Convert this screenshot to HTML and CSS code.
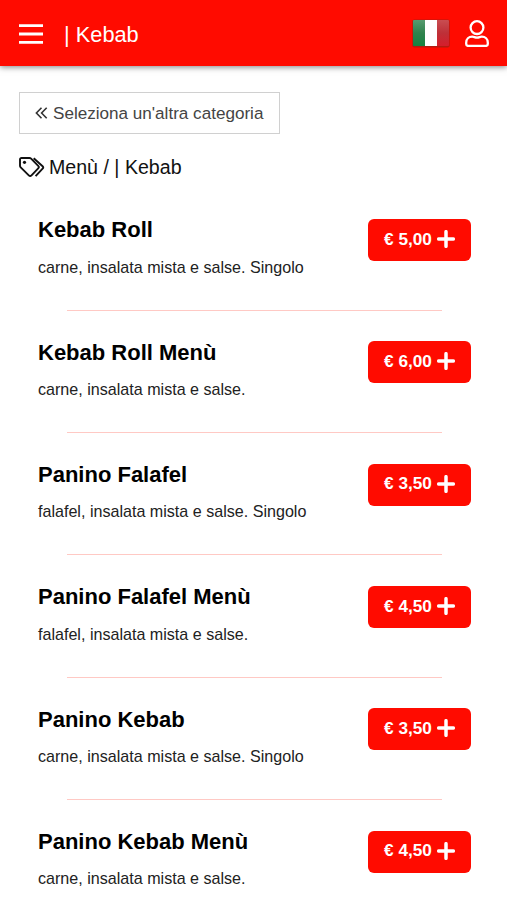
FILE: index.html
```html
<!DOCTYPE html>
<html lang="it">
<head>
<meta charset="utf-8">
<meta name="viewport" content="width=device-width, initial-scale=1">
<title>Menù | Kebab</title>
<link rel="stylesheet" href="styles.css">
</head>
<body>
<header class="topbar">
  <svg class="menu-icon" viewBox="0 0 24 20" aria-hidden="true"><path d="M0 1.7h24M0 10h24M0 18.3h24"/></svg>
  <h1 class="title">| Kebab</h1>
  <svg class="flag" viewBox="0 0 38 29" aria-hidden="true">
    <defs>
      <linearGradient id="green" x2="0" y2="1"><stop stop-color="#579b70"/><stop offset=".5" stop-color="#30834d"/><stop offset="1" stop-color="#168341"/></linearGradient>
      <linearGradient id="red" x2="0" y2="1"><stop stop-color="#c94d51"/><stop offset=".5" stop-color="#be3038"/><stop offset="1" stop-color="#d51e2b"/></linearGradient>
    </defs>
    <rect x=".3" y=".6" width="37.4" height="28" rx="2" fill="#b51b10"/>
    <path fill="url(#green)" d="M2 1h11v26H2a1 1 0 0 1-1-1V2a1 1 0 0 1 1-1z"/>
    <path fill="#fff" d="M13 1h12v26H13z"/>
    <path fill="url(#red)" d="M25 1h11a1 1 0 0 1 1 1v24a1 1 0 0 1-1 1H25z"/>
  </svg>
  <svg class="user-icon" viewBox="0 0 24 27" aria-hidden="true"><circle cx="12" cy="7.600" r="6.400"/><path d="M7.200 16.700c1.800 0 2.600.9 4.800.9s3-.9 4.800-.9c3.400 0 6 2.600 6 6v1.300c0 1.100-.8 1.900-1.900 1.900H3.100c-1.100 0-1.900-.8-1.900-1.900v-1.300c0-3.400 2.600-6 6-6z"/></svg>
</header>
<main class="content">
  <a class="back">
    <svg class="back-icon" viewBox="0 0 12 12" aria-hidden="true"><path d="M6 .8.9 6 6 11.200M11.200.8 6.100 6l5.100 5.200"/></svg>
    <span>Seleziona un'altra categoria</span>
  </a>
  <div class="crumbs">
    <svg class="tags-icon" viewBox="0 0 26 20" aria-hidden="true"><path d="M2.500 1h7.900c.7 0 1.200.2 1.700.7l7.100 7.100c.8.8.8 1.800 0 2.600l-6.700 6.900c-.8.8-1.900.8-2.700 0L1.700 10.400c-.5-.5-.7-1-.7-1.700V2.500C1 1.600 1.600 1 2.500 1zM14.700 1.200l8.900 8c.8.800.8 1.600 0 2.400l-7 7.500"/><circle cx="5.500" cy="5.300" r="1.600"/></svg>
    <span>Menù / | Kebab</span>
  </div>
  <ul class="menu">
    <li class="item"><div class="info"><h2 class="name">Kebab Roll</h2><p class="desc">carne, insalata mista e salse. Singolo</p></div><button class="price"><span>€ 5,00</span><svg class="plus" viewBox="0 0 18 18"><path d="M9 1.700v14.600M1.700 9h14.600"/></svg></button></li>
    <li class="item"><div class="info"><h2 class="name">Kebab Roll Menù</h2><p class="desc">carne, insalata mista e salse.</p></div><button class="price"><span>€ 6,00</span><svg class="plus" viewBox="0 0 18 18"><path d="M9 1.700v14.600M1.700 9h14.600"/></svg></button></li>
    <li class="item"><div class="info"><h2 class="name">Panino Falafel</h2><p class="desc">falafel, insalata mista e salse. Singolo</p></div><button class="price"><span>€ 3,50</span><svg class="plus" viewBox="0 0 18 18"><path d="M9 1.700v14.600M1.700 9h14.600"/></svg></button></li>
    <li class="item"><div class="info"><h2 class="name">Panino Falafel Menù</h2><p class="desc">falafel, insalata mista e salse.</p></div><button class="price"><span>€ 4,50</span><svg class="plus" viewBox="0 0 18 18"><path d="M9 1.700v14.600M1.700 9h14.600"/></svg></button></li>
    <li class="item"><div class="info"><h2 class="name">Panino Kebab</h2><p class="desc">carne, insalata mista e salse. Singolo</p></div><button class="price"><span>€ 3,50</span><svg class="plus" viewBox="0 0 18 18"><path d="M9 1.700v14.600M1.700 9h14.600"/></svg></button></li>
    <li class="item"><div class="info"><h2 class="name">Panino Kebab Menù</h2><p class="desc">carne, insalata mista e salse.</p></div><button class="price"><span>€ 4,50</span><svg class="plus" viewBox="0 0 18 18"><path d="M9 1.700v14.600M1.700 9h14.600"/></svg></button></li>
  </ul>
</main>
</body>
</html>
```
FILE: styles.css
```css
* { box-sizing: border-box; }
html, body { height: 100%; }
body {
  margin: 0;
  overflow: hidden;
  background: #fff;
  color: #111;
  font-family: "Liberation Sans", Arial, sans-serif;
}
svg { display: block; flex: none; fill: none; }
.topbar {
  display: flex;
  align-items: center;
  height: 66px;
  padding: 2px 18px 0 19px;
  background: #ff0b00;
  box-shadow: 0 1px 6px rgba(0, 0, 0, .5);
}
.menu-icon { width: 24px; height: 20px; stroke: #fff; stroke-width: 2.8; }
.title {
  flex: 1;
  margin: 2px 0 0 21px;
  color: #fff;
  font-size: 21.8px;
  font-weight: 400;
  line-height: 26px;
}
.flag { width: 38px; height: 29px; margin-bottom: 1px; }
.user-icon { width: 24px; height: 27px; margin: 0 0 2px 15px; stroke: #fff; stroke-width: 2.3; }
.content { padding: 26px 19px 0; }
.back {
  display: flex;
  align-items: center;
  gap: 5px;
  width: 261px;
  height: 42px;
  padding: 1px 0 0 15px;
  border: 1px solid #d0d0d0;
  color: #444;
  font-size: 17.1px;
  white-space: nowrap;
}
.back-icon { width: 13px; height: 12px; margin-bottom: 2px; stroke: #333; stroke-width: 1.600; }
.crumbs {
  display: flex;
  align-items: center;
  gap: 4px;
  height: 26px;
  margin-top: 20px;
  font-size: 19.6px;
}
.tags-icon { width: 26px; height: 20px; stroke: #111; stroke-width: 1.900; }
.tags-icon circle { fill: #111; stroke: none; }
.menu { margin: 8px 0 0; padding: 0 17px 0 19px; list-style: none; }
.item {
  display: flex;
  flex-wrap: wrap;
  align-items: flex-start;
  justify-content: space-between;
  height: 122.35px;
  padding-top: 31px;
}
.item:not(:last-child)::after {
  content: "";
  width: 375px;
  height: 1px;
  margin: 0 29px;
  background: #ffc9c4;
}
.info { height: 90.7px; }
.name { margin: -1.800px 0 0; color: #000; font-size: 22px; line-height: 26px; }
.desc { margin: 13.300px 0 0; color: #222; font-size: 16.1px; line-height: 20px; }
.price {
  display: flex;
  align-items: center;
  justify-content: center;
  gap: 5px;
  width: 103px;
  height: 42px;
  padding: 0 0 2px;
  border: 0;
  border-radius: 6px;
  background: #ff0b00;
  color: #fff;
  font: bold 17.2px "Liberation Sans", Arial, sans-serif;
}
.plus { width: 18px; height: 18px; stroke: #fff; stroke-width: 3.500; stroke-linecap: round; }
```
